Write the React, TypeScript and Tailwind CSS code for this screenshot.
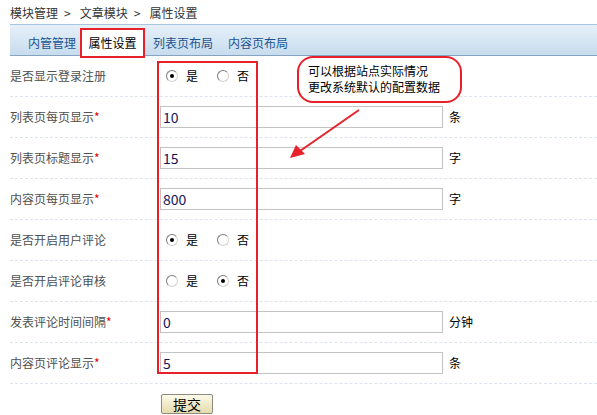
import React from "react";

const FONT = { fontFamily: '"Noto Sans CJK SC", "Noto Sans", sans-serif' };

function Radio({ checked }: { checked?: boolean }) {
  return (
    <span className="flex h-[12px] w-[12px] items-center justify-center rounded-full border border-t-[#7a7a7a] border-l-[#7a7a7a] border-r-[#d6d3cc] border-b-[#d6d3cc] bg-white">
      {checked && <span className="h-[4px] w-[4px] rounded-full bg-black" />}
    </span>
  );
}

function Label({ text, required }: { text: string; required?: boolean }) {
  return (
    <div className="w-[150px] shrink-0 text-[12px] leading-[14px] text-[#505050]">
      {text}
      {required && <span className="text-[#e60000]">*</span>}
    </div>
  );
}

function Row({ children }: { children: React.ReactNode }) {
  return (
    <div className="flex h-[41px] items-center border-b border-dashed border-[#dde3ec]">
      {children}
    </div>
  );
}

function InputRow({ label, value, unit }: { label: string; value: string; unit: string }) {
  return (
    <Row>
      <Label text={label} required />
      <div className="flex h-[22px] w-[283px] items-center border border-[#c3c3c3] bg-white pl-[2px] text-[14px] leading-[16px] text-[#14145a]">
        {value}
      </div>
      <span className="ml-[6px] text-[12px] leading-[14px] text-black">{unit}</span>
    </Row>
  );
}

function RadioRow({ label, yes }: { label: string; yes: boolean }) {
  return (
    <Row>
      <Label text={label} />
      <div className="flex items-center text-[12px] leading-[14px] text-black">
        <span className="ml-[6px]">
          <Radio checked={yes} />
        </span>
        <span className="ml-[8px]">是</span>
        <span className="ml-[19px]">
          <Radio checked={!yes} />
        </span>
        <span className="ml-[8px]">否</span>
      </div>
    </Row>
  );
}

export default function App() {
  return (
    <div className="relative h-[415px] w-[597px] overflow-hidden bg-white" style={FONT}>
      {/* breadcrumb */}
      <div className="flex h-[24px] items-center pl-[10px] pt-[1px] text-[12px] leading-[14px] text-[#333]">
        <span>模块管理</span>
        <span className="ml-[6px] mr-[9px]">&gt;</span>
        <span>文章模块</span>
        <span className="ml-[6px] mr-[9px]">&gt;</span>
        <span>属性设置</span>
      </div>

      {/* tab bar */}
      <div className="ml-[10px] flex h-[32px] items-end border-t border-b border-t-[#a9c5de] border-b-[#86a4c2] bg-gradient-to-b from-[#e6f0f9] to-[#c7dcee] text-[12px] leading-[14px]">
        <div className="-mb-[3px] ml-[18px] flex h-[30px] items-center text-[#1b5391]">内管管理</div>
        <div className="relative z-10 -mb-[3px] ml-[4px] flex h-[30px] w-[65px] items-center justify-center border-2 border-[#e8202a] bg-white text-black">
          属性设置
        </div>
        <div className="-mb-[3px] ml-[8px] flex h-[30px] items-center text-[#1b5391]">列表页布局</div>
        <div className="-mb-[3px] ml-[15px] flex h-[30px] items-center text-[#1b5391]">内容页布局</div>
      </div>

      {/* form */}
      <div className="ml-[10px]">
        <RadioRow label="是否显示登录注册" yes />
        <InputRow label="列表页每页显示" value="10" unit="条" />
        <InputRow label="列表页标题显示" value="15" unit="字" />
        <InputRow label="内容页每页显示" value="800" unit="字" />
        <RadioRow label="是否开启用户评论" yes />
        <RadioRow label="是否开启评论审核" yes={false} />
        <InputRow label="发表评论时间间隔" value="0" unit="分钟" />
        <InputRow label="内容页评论显示" value="5" unit="条" />
        <div className="pl-[151px] pt-[10px]">
          <button className="flex h-[20px] w-[52px] items-center justify-center rounded-[2px] border border-[#8c8c80] bg-gradient-to-b from-[#fdfaea] to-[#e5dbab] text-[14px] leading-[16px] text-black">
            提交
          </button>
        </div>
      </div>

      {/* annotation: highlighted column */}
      <div className="absolute left-[157px] top-[61px] h-[313px] w-[101px] border-2 border-[#e8202a]" />

      {/* annotation: callout */}
      <div className="absolute left-[297px] top-[56px] flex h-[47px] w-[165px] items-center rounded-[16px] border-2 border-[#e8202a] bg-white pb-[1px] pl-[9px] text-[12px] leading-[16px] text-black">
        <p>
          可以根据站点实际情况
          <br />
          更改系统默认的配置数据
        </p>
      </div>

      {/* annotation: arrow */}
      <svg className="absolute left-0 top-0" width="597" height="415" viewBox="0 0 597 415">
        <line x1="359" y1="110" x2="300" y2="151" stroke="#e8202a" strokeWidth="2" />
        <polygon points="290,158 296,145 305,154" fill="#e8202a" />
      </svg>
    </div>
  );
}
